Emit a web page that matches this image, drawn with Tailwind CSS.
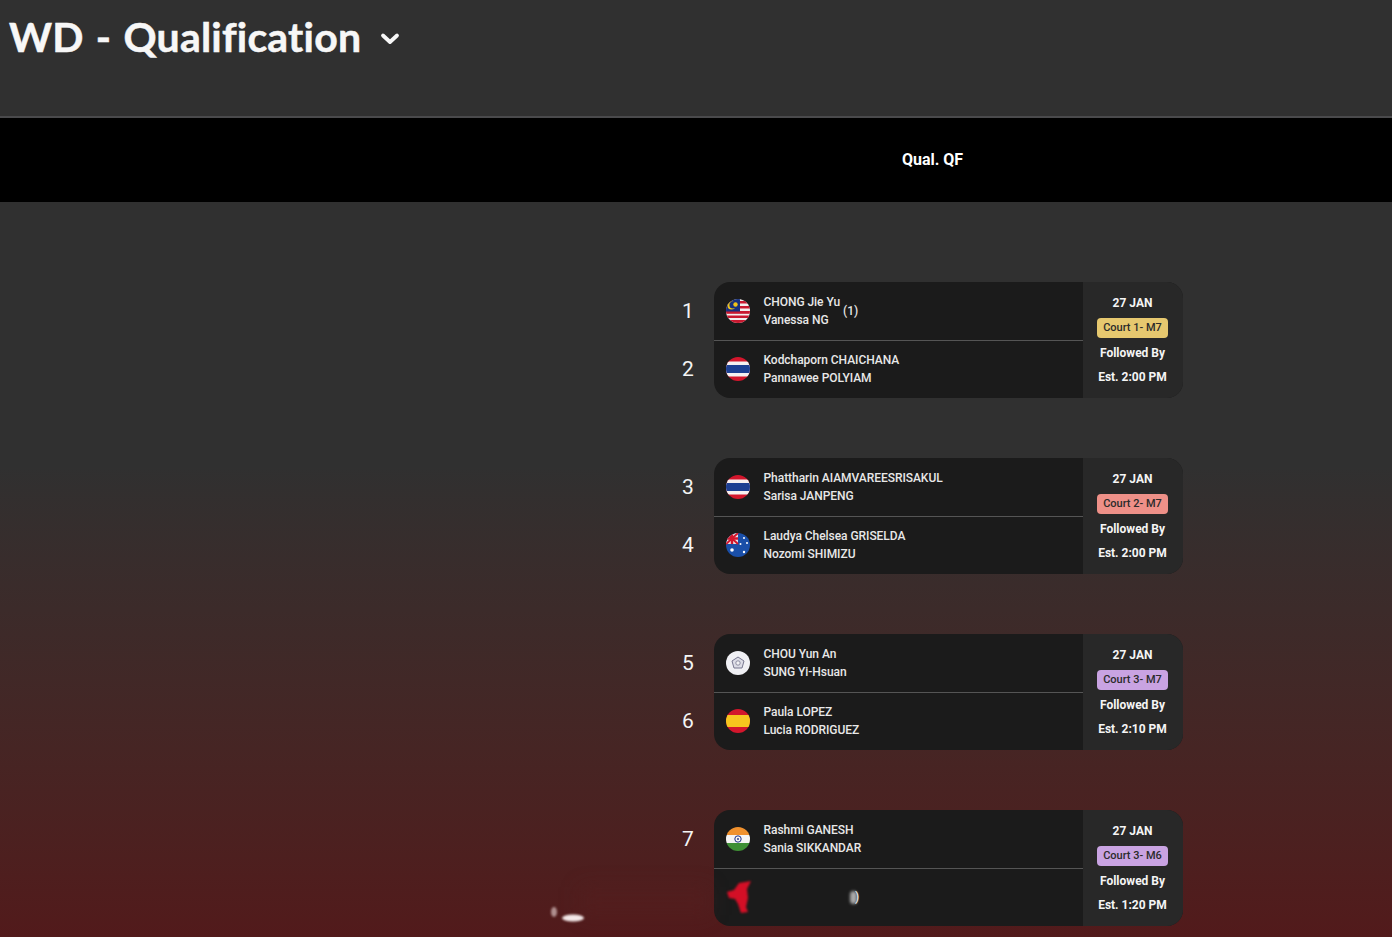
<!DOCTYPE html>
<html lang="en">
<head>
  <meta charset="UTF-8" />
  <meta name="viewport" content="width=device-width, initial-scale=1.0" />
  <title>WD - Qualification</title>
  <script src="https://cdn.jsdelivr.net/npm/@tailwindcss/browser@4"></script>
</head>
<body class="h-[937px] overflow-hidden bg-[#303030] text-white font-['Roboto',sans-serif]">
  <!-- title bar -->
  <header class="h-[118px] border-b-2 border-[#4a4a4c] bg-[#303030] pl-[9px] pt-[12px]">
    <div class="flex items-center">
      <h1 class="font-['Lato',sans-serif] text-[41px] leading-[50px] font-bold tracking-[0.2px] text-[#f7f7f7] [word-spacing:2px] [-webkit-text-stroke:0.5px_#f7f7f7]">WD - Qualification</h1>
      <svg class="ml-[18px] mt-[3px]" width="22" height="22" viewBox="0 0 22 22" fill="none" stroke="#f7f7f7" stroke-width="3.8" stroke-linecap="round" stroke-linejoin="round"><path d="M4 7.5 L11 14 L18 7.5"/></svg>
    </div>
  </header>

  <!-- round header -->
  <div class="h-[84px] bg-black pl-[682px]">
    <div class="flex h-full w-[501px] items-center justify-center text-[16px] font-bold">Qual. QF</div>
  </div>

  <!-- draw -->
  <main class="relative h-[735px] bg-gradient-to-b from-[#303030] from-[36%] to-[#521a1b] pl-[682px] pt-[80px]">
    <div id="draw" class="flex w-[501px] flex-col gap-[60px]"></div>

    <!-- smudged area over the last row -->
    <div class="absolute left-[580px] top-[685px] h-[28px] w-[130px] bg-[#5a2021]/30 blur-[10px]"></div>
    <svg class="absolute left-[545px] top-[672px] blur-[1px]" width="60" height="50" viewBox="0 0 60 50"><ellipse cx="28" cy="44" rx="11" ry="3.5" fill="#f3e8e8"/><ellipse cx="9" cy="38" rx="3" ry="5" fill="#b09090"/></svg>
    <svg class="absolute left-[726px] top-[678px] blur-[1px]" width="32" height="34" viewBox="0 0 32 34"><path d="M1 12 L8 10 L13 3 L25 1 L21 9 L22 18 L20 27 L22 32 L15 33 L12 24 L9 19 L3 18 Z" fill="#d40f26"/></svg>
    <div class="absolute left-[850px] top-[689px] h-[13px] w-[7px] rounded-full bg-[#a8a8a8] blur-[1.5px]"></div>
    <div class="absolute left-[855px] top-[686px] text-[12px] leading-[18px] font-medium text-[#e4e4e4]">)</div>
  </main>

  <script>
    const flags = {
      mas: `<rect width="24" height="24" fill="#f3eeee"/><rect y="2" width="24" height="2.5" fill="#c9182f"/><rect y="7" width="24" height="2.5" fill="#c9182f"/><rect y="12" width="24" height="2.8" fill="#c9182f"/><rect y="16.5" width="24" height="2.5" fill="#c9182f"/><rect y="21" width="24" height="3" fill="#c9182f"/><rect width="14" height="12.5" fill="#16307e"/><circle cx="5.5" cy="6.5" r="4" fill="#f0c419"/><circle cx="7" cy="6" r="3.6" fill="#16307e"/><circle cx="9.5" cy="5.5" r="2.2" fill="#f0c419"/>`,
      tha: `<rect width="24" height="24" fill="#d3162c"/><rect y="4.5" width="24" height="15" fill="#f6f0f0"/><rect y="8" width="24" height="8" fill="#1d3f92"/>`,
      aus: `<rect width="24" height="24" fill="#1a4fa8"/><rect width="12" height="11" fill="#e9dfe2"/><path d="M0 0 L12 11 M12 0 L0 11" stroke="#d3162c" stroke-width="2"/><path d="M6 0 V11 M0 5.5 H12" stroke="#d3162c" stroke-width="2.4"/><circle cx="6" cy="17" r="1.8" fill="#fff"/><circle cx="18" cy="5" r="1" fill="#fff"/><circle cx="18" cy="19" r="1.2" fill="#fff"/><circle cx="14.5" cy="11" r="1" fill="#fff"/><circle cx="21" cy="10" r="1" fill="#fff"/>`,
      tpe: `<rect width="24" height="24" fill="#f0f0f4"/><path d="M12 6 L18 10 L16 17 H8 L6 10 Z" fill="#dcdce6" stroke="#77778f" stroke-width="1"/><circle cx="12" cy="12" r="2.2" fill="#f2f2f5" stroke="#77778f" stroke-width="0.8"/>`,
      esp: `<rect width="24" height="24" fill="#d3162c"/><rect y="6" width="24" height="12" fill="#f7c51e"/>`,
      ind: `<rect width="24" height="8" fill="#f0912e"/><rect y="8" width="24" height="8" fill="#f6f4f4"/><rect y="16" width="24" height="8" fill="#3f8f35"/><circle cx="12" cy="12" r="3.2" fill="none" stroke="#1d2f86" stroke-width="1"/><circle cx="12" cy="12" r="0.9" fill="#1d2f86"/>`,
    };

    const matches = [
      { top: { seed: 1, flag: "mas", names: ["CHONG Jie Yu", "Vanessa NG"], note: "(1)" }, bottom: { seed: 2, flag: "tha", names: ["Kodchaporn CHAICHANA", "Pannawee POLYIAM"] }, court: "Court 1- M7", pill: "bg-[#e6c86f]", time: "Est. 2:00 PM" },
      { top: { seed: 3, flag: "tha", names: ["Phattharin AIAMVAREESRISAKUL", "Sarisa JANPENG"] }, bottom: { seed: 4, flag: "aus", names: ["Laudya Chelsea GRISELDA", "Nozomi SHIMIZU"] }, court: "Court 2- M7", pill: "bg-[#ee9088]", time: "Est. 2:00 PM" },
      { top: { seed: 5, flag: "tpe", names: ["CHOU Yun An", "SUNG Yi-Hsuan"] }, bottom: { seed: 6, flag: "esp", names: ["Paula LOPEZ", "Lucia RODRIGUEZ"] }, court: "Court 3- M7", pill: "bg-[#c9a3e2]", time: "Est. 2:10 PM" },
      { top: { seed: 7, flag: "ind", names: ["Rashmi GANESH", "Sania SIKKANDAR"] }, bottom: { seed: "", flag: null, names: ["", ""] }, court: "Court 3- M6", pill: "bg-[#c9a3e2]", time: "Est. 1:20 PM" },
    ];

    function seedCell(team) {
      return `<div class="flex h-[58px] w-[32px] items-center pt-[2px] text-[21px] text-[#f4f4f4]">${team.seed}</div>`;
    }

    function teamRow(team, h) {
      const flag = team.flag
        ? `<svg class="shrink-0 rounded-full" width="24" height="24" viewBox="0 0 24 24">${flags[team.flag]}</svg>`
        : `<div class="h-[24px] w-[24px] shrink-0"></div>`;
      const note = team.note ? `<span class="ml-[3px] text-[12px] font-medium text-[#e4e4e4]">${team.note}</span>` : "";
      return `<div class="flex ${h} items-center pl-[12px]">
        ${flag}
        <div class="ml-[13.5px] text-[12px] leading-[18px] font-medium tracking-[-0.05px] text-[#e8e8e8]">
          <div class="h-[18px]">${team.names[0]}</div>
          <div class="h-[18px]">${team.names[1]}</div>
        </div>
        ${note}
      </div>`;
    }

    document.getElementById("draw").innerHTML = matches.map((m) => `
      <div class="flex h-[116px]">
        <div class="flex flex-col">
          ${seedCell(m.top)}
          ${seedCell(m.bottom)}
        </div>
        <div class="flex flex-1 overflow-hidden rounded-[16px] bg-[#1b1b1b]">
          <div class="flex flex-1 flex-col">
            ${teamRow(m.top, "h-[59px] border-b border-[#555555]")}
            ${teamRow(m.bottom, "h-[57px] pb-px")}
          </div>
          <div class="flex w-[100px] flex-col items-center bg-[#282828] pr-px pt-[12px] text-[12px] font-bold text-[#f5f5f5]">
            <div class="h-[18px] leading-[18px]">27 JAN</div>
            <div class="mt-[6px] h-[20px] w-[71px] rounded-[4px] ${m.pill} text-center text-[11px] leading-[20px] font-medium text-[#2b2b2b]">${m.court}</div>
            <div class="mt-[6px] h-[18px] leading-[18px]">Followed By</div>
            <div class="mt-[6px] h-[18px] leading-[18px]">${m.time}</div>
          </div>
        </div>
      </div>`).join("");
  </script>
</body>
</html>
